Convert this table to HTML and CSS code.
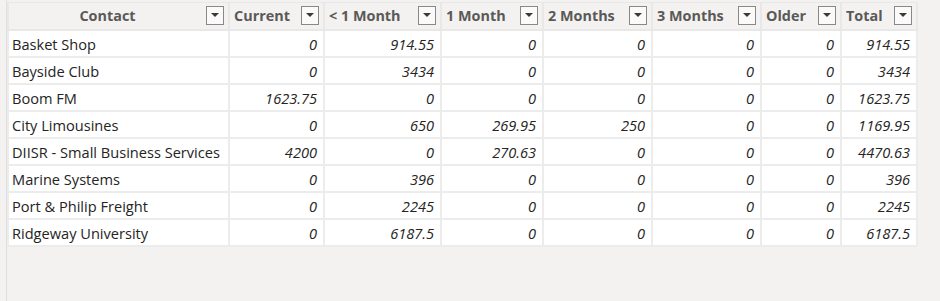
FILE: index.html
```html
<!DOCTYPE html>
<html>
<head>
<meta charset="utf-8">
<link rel="stylesheet" href="styles.css">
</head>
<body>
<div class="pane">
<table class="grid">
<colgroup>
<col class="c-contact"><col class="c-cur"><col class="c-lt1"><col class="c-m1"><col class="c-m2"><col class="c-m3"><col class="c-old"><col class="c-tot">
</colgroup>
<thead>
<tr>
<th><div class="hd center"><span class="lbl">Contact</span><span class="dd"></span></div></th>
<th><div class="hd"><span class="lbl">Current</span><span class="dd"></span></div></th>
<th><div class="hd"><span class="lbl">&lt; 1 Month</span><span class="dd"></span></div></th>
<th><div class="hd"><span class="lbl">1 Month</span><span class="dd"></span></div></th>
<th><div class="hd"><span class="lbl">2 Months</span><span class="dd"></span></div></th>
<th><div class="hd"><span class="lbl">3 Months</span><span class="dd"></span></div></th>
<th><div class="hd"><span class="lbl">Older</span><span class="dd"></span></div></th>
<th><div class="hd"><span class="lbl">Total</span><span class="dd"></span></div></th>
</tr>
</thead>
<tbody>
<tr><td>Basket Shop</td><td class="n">0</td><td class="n">914.55</td><td class="n">0</td><td class="n">0</td><td class="n">0</td><td class="n">0</td><td class="n">914.55</td></tr>
<tr><td>Bayside Club</td><td class="n">0</td><td class="n">3434</td><td class="n">0</td><td class="n">0</td><td class="n">0</td><td class="n">0</td><td class="n">3434</td></tr>
<tr><td>Boom FM</td><td class="n">1623.75</td><td class="n">0</td><td class="n">0</td><td class="n">0</td><td class="n">0</td><td class="n">0</td><td class="n">1623.75</td></tr>
<tr><td>City Limousines</td><td class="n">0</td><td class="n">650</td><td class="n">269.95</td><td class="n">250</td><td class="n">0</td><td class="n">0</td><td class="n">1169.95</td></tr>
<tr><td>DIISR - Small Business Services</td><td class="n">4200</td><td class="n">0</td><td class="n">270.63</td><td class="n">0</td><td class="n">0</td><td class="n">0</td><td class="n">4470.63</td></tr>
<tr><td>Marine Systems</td><td class="n">0</td><td class="n">396</td><td class="n">0</td><td class="n">0</td><td class="n">0</td><td class="n">0</td><td class="n">396</td></tr>
<tr><td>Port &amp; Philip Freight</td><td class="n">0</td><td class="n">2245</td><td class="n">0</td><td class="n">0</td><td class="n">0</td><td class="n">0</td><td class="n">2245</td></tr>
<tr><td>Ridgeway University</td><td class="n">0</td><td class="n">6187.5</td><td class="n">0</td><td class="n">0</td><td class="n">0</td><td class="n">0</td><td class="n">6187.5</td></tr>
</tbody>
</table>
</div>
</body>
</html>
```
FILE: styles.css
```css
html, body {
  margin: 0;
  padding: 0;
  background: #f3f2f1;
}
body {
  font-family: "Open Sans", "Noto Sans", sans-serif;
  color: #252423;
}
.pane {
  margin-left: 6px;
  height: 301px;
  box-sizing: border-box;
  border-left: 1px solid #e1dfdd;
  padding-top: 2px;
}
.grid {
  border-collapse: collapse;
  table-layout: fixed;
  width: 909px;
  font-size: 14.6px;
}
.c-contact { width: 221px; }
.c-cur { width: 95px; }
.c-lt1 { width: 117px; }
.c-m1 { width: 102px; }
.c-m2 { width: 109px; }
.c-m3 { width: 109px; }
.c-old { width: 80px; }
.c-tot { width: 76px; }
.grid th {
  background: #f3f2f1;
  border: 2px solid #e8e8e8;
  border-top-width: 1px;
  height: 27px;
  padding: 0 4px 0 4px;
  box-sizing: border-box;
  font-weight: 700;
  font-size: 14.4px;
  color: #5b5957;
  text-align: left;
}
.hd {
  display: flex;
  align-items: center;
  gap: 4px;
}
.hd .lbl {
  flex: 1;
  white-space: nowrap;
  overflow: hidden;
}
.hd.center .lbl {
  text-align: center;
}
.dd {
  flex: none;
  width: 18px;
  height: 19px;
  box-sizing: border-box;
  border: 1px solid #8a8886;
  background: #fafafa;
  position: relative;
}
.dd::after {
  content: "";
  position: absolute;
  left: 4px;
  top: 6px;
  border-left: 4px solid transparent;
  border-right: 4px solid transparent;
  border-top: 4px solid #3b3a39;
}
.grid td {
  background: #ffffff;
  border: 2px solid #ececec;
  height: 27px;
  box-sizing: border-box;
  padding: 2px 3px 0 3px;
  white-space: nowrap;
  overflow: hidden;
}
.grid td.n {
  text-align: right;
  font-style: italic;
  padding-right: 6px;
}
```
